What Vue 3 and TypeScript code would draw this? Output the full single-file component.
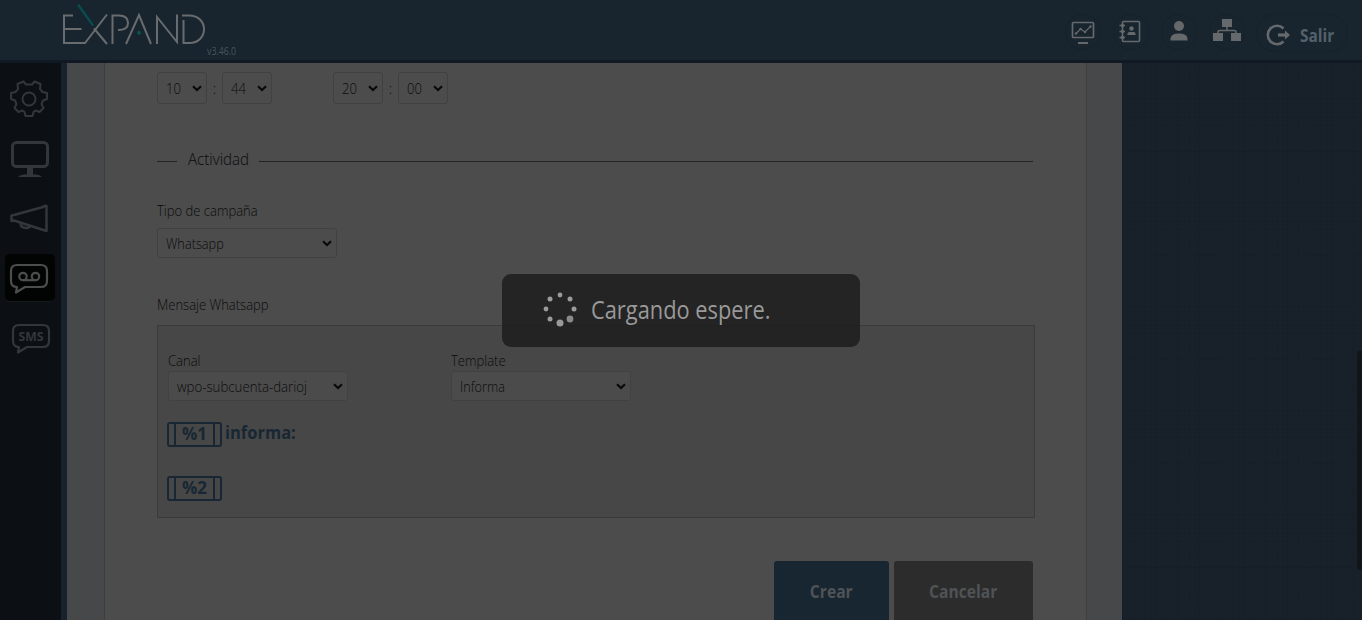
<script setup lang="ts">
interface TimeGroup { hour: string; minute: string }
interface Field { id: string; label: string; value: string }
interface MessageLine { variable: string; text: string }

const times: TimeGroup[] = [
  { hour: '10', minute: '44' },
  { hour: '20', minute: '00' },
]
const channelFields: Field[] = [
  { id: 'canal', label: 'Canal', value: 'wpo-subcuenta-darioj' },
  { id: 'template', label: 'Template', value: 'Informa' },
]
const message: MessageLine[] = [
  { variable: '%1', text: 'informa:' },
  { variable: '%2', text: '' },
]
// Spinner dots: position, radius and colour
const dots = [
  { x: 18, y: 4, r: 2.4, c: '#9b9b9b' },
  { x: 28, y: 8, r: 2.5, c: '#9b9b9b' },
  { x: 32, y: 18, r: 2.5, c: '#9b9b9b' },
  { x: 28, y: 28, r: 3.4, c: '#8a8a8a' },
  { x: 18, y: 32, r: 3.5, c: '#999999' },
  { x: 8, y: 28, r: 2.5, c: '#9b9b9b' },
  { x: 4, y: 18, r: 2.4, c: '#9b9b9b' },
  { x: 8, y: 8, r: 2.5, c: '#9b9b9b' },
]
</script>

<template>
  <div class="app">
    <header class="header">
      <div class="brand">
        <svg class="logo" width="146" height="48" viewBox="60 0 146 48" fill="none" stroke="#686c6f" stroke-width="2">
          <path d="M73 15.500H64V43H85L107 14.500M64 29H81.500M94 28.500L107 44" />
          <path d="M78 4.500L93 25.500" stroke="#0b4b4d" stroke-width="2.500" />
          <path d="M112.500 44V15.500H119Q128 15.500 128 23Q128 30 118 30" />
          <path d="M126 44L139 15L151 44" />
          <circle cx="139" cy="32.700" r="2" fill="#0b5052" stroke="none" />
          <path d="M157 44V17L177 42V14.500" />
          <path d="M183.500 20V43H189C209 43 209 15.500 189 15.500H182" />
        </svg>
        <span class="version">v3.46.0</span>
      </div>
      <nav class="actions">
        <a class="round">
          <svg width="28" height="28" viewBox="0 0 28 28" fill="none" stroke="#65696c">
            <rect x="3.500" y="4.500" width="21" height="15" rx="1" stroke-width="1.700" />
            <path d="M7 15.500L11.500 11L16 14L21.500 8.500" stroke-width="1.200" />
            <g fill="#65696c" stroke="none"><circle cx="7" cy="15.500" r="1.200" /><circle cx="11.500" cy="11" r="1.200" /><circle cx="16" cy="14" r="1.200" /><circle cx="21.500" cy="8.500" r="1.200" /></g>
            <path d="M9 25H19" stroke-width="2" />
          </svg>
        </a>
        <a class="round">
          <svg width="28" height="28" viewBox="0 0 28 28" fill="none" stroke="#65696c">
            <rect x="5.500" y="3.500" width="17" height="20" rx="1" stroke-width="1.600" />
            <path d="M2.500 7.500H8M2.500 13.500H8M2.500 19.500H8" stroke-width="1.500" />
            <g fill="#65696c" stroke="none"><circle cx="5.500" cy="7.500" r="1.700" /><circle cx="5.500" cy="13.500" r="1.700" /><circle cx="5.500" cy="19.500" r="1.700" /><circle cx="14.500" cy="10.500" r="2.200" /><path d="M10.500 17V15.500Q10.500 14 12.500 14H16.500Q18.500 14 18.500 15.500V17Z" /></g>
          </svg>
        </a>
        <a class="round">
          <svg width="28" height="28" viewBox="0 0 28 28" fill="#65696c">
            <circle cx="14" cy="8" r="5" />
            <path d="M5.500 22.500V20.500Q6 15.500 14 15.500T22.500 20.500V22.500Z" />
          </svg>
        </a>
        <a class="round">
          <svg width="28" height="28" viewBox="0 0 28 28" fill="#65696c">
            <path d="M9 1H19V9H9ZM0 15H10V23H0ZM18 15H28V23H18Z" />
            <path d="M14 9V12.500M5 15V14Q5 12.500 7 12.500H21Q23 12.500 23 14V15" fill="none" stroke="#65696c" stroke-width="1.500" />
          </svg>
        </a>
        <a class="logout">
          <svg width="26" height="24" viewBox="0 0 26 24" fill="none" stroke="#65696c" stroke-width="2.600">
            <path d="M18.500 5.500A9.200 9.200 0 1 0 18.500 18.500" />
            <path d="M13 12H21" stroke-width="3.200" /><path d="M20 7.500L25 12L20 16.500Z" fill="#65696c" stroke="none" />
          </svg>
          <span>Salir</span>
        </a>
      </nav>
    </header>

    <div class="body">
      <aside class="sidebar">
        <a class="tool">
          <svg width="40" height="40" viewBox="0 0 40 40" fill="none" stroke="#33373b" stroke-width="2" stroke-linejoin="round">
            <path d="M14.500 3.500L17 6.500H23L25.500 3.500L31.500 6L31 11L33.500 14L38 15V21L34 22.500L32.500 26L34.500 30L30.500 34L26.500 32.500L24.500 34L23.500 38H16.500L15.500 34L13.500 32.500L9.500 34L5.500 30L7.500 26L6 22.500L2 21V15L6.500 14L9 11L8.500 6Z" />
            <circle cx="20" cy="21" r="6.500" />
          </svg>
        </a>
        <a class="tool">
          <svg width="40" height="40" viewBox="0 0 40 40" fill="none" stroke="#33373b" stroke-width="3">
            <rect x="3.500" y="4.500" width="35" height="24" rx="4" />
            <path d="M21 29V37" stroke-width="6" /><path d="M9 39Q11 36.500 15 36.500H27Q31 36.500 33 39Z" fill="#33373b" stroke="none" />
          </svg>
        </a>
        <a class="tool">
          <svg width="40" height="40" viewBox="0 0 40 40" fill="none" stroke="#33373b" stroke-width="2.500" stroke-linejoin="round">
            <path d="M37.500 8V33L5 22.500L2.500 23V17.500L5 17L34 9Q35 7.500 37.500 8Z" />
            <path d="M11.500 25Q11.500 30 17.500 30Q20.500 30 20.500 27.500" />
          </svg>
        </a>
        <a class="tool selected">
          <svg width="40" height="40" viewBox="0 0 40 40" fill="none" stroke="#4c4d4d" stroke-width="2.200" stroke-linejoin="round">
            <path d="M8 7H32Q38 7 38 13V23Q38 29 32 29H16L7 34.500L8 29Q2 29 2 23V13Q2 7 8 7Z" />
            <circle cx="14" cy="18.500" r="3.700" /><circle cx="26.500" cy="18.500" r="3.700" /><path d="M14 22.200H26.500" />
          </svg>
        </a>
        <a class="tool sms">
          <svg width="40" height="40" viewBox="0 0 40 40" fill="none" stroke="#33373b" stroke-width="2.200" stroke-linejoin="round">
            <path d="M8 7H32Q38 7 38 13V23Q38 29 32 29H16L7 34.500L8 29Q2 29 2 23V13Q2 7 8 7Z" />
            <text x="7.500" y="22.500" textLength="25" lengthAdjust="spacingAndGlyphs" fill="#33373b" stroke="none">SMS</text>
          </svg>
        </a>
      </aside>

      <main class="panel">
        <div class="sheet">
          <div class="times">
            <div v-for="time in times" :key="time.hour" class="time">
              <div class="select small"><span class="label">{{ time.hour }}</span><svg width="10" height="7" viewBox="0 0 10 7"><path d="M1 1.200L5 5L9 1.200" /></svg></div>
              <span class="colon">:</span>
              <div class="select small"><span class="label">{{ time.minute }}</span><svg width="10" height="7" viewBox="0 0 10 7"><path d="M1 1.200L5 5L9 1.200" /></svg></div>
            </div>
          </div>
          <div class="section"><i class="lead"></i><h2><span>Actividad</span></h2><i class="rule"></i></div>
          <div class="label type">Tipo de campaña</div>
          <div class="select"><span class="label whatsapp">Whatsapp</span><svg width="10" height="7" viewBox="0 0 10 7"><path d="M1 1.200L5 5L9 1.200" /></svg></div>
          <div class="label message-label">Mensaje Whatsapp</div>
          <section class="box">
            <div class="fields">
              <div v-for="field in channelFields" :key="field.id" class="field">
                <div class="label">{{ field.label }}</div>
                <div class="select"><span class="label" :class="field.id + '-value'">{{ field.value }}</span><svg width="10" height="7" viewBox="0 0 10 7"><path d="M1 1.200L5 5L9 1.200" /></svg></div>
              </div>
            </div>
            <div v-for="line in message" :key="line.variable" class="line">
              <span class="token"><b>{{ line.variable }}</b></span><span class="copy">{{ line.text }}</span>
            </div>
          </section>
          <div class="buttons">
            <button class="create"><span>Crear</span></button>
            <button class="cancel"><span>Cancelar</span></button>
          </div>
        </div>
      </main>
      <div class="backdrop"><i class="scrollbar"></i></div>
    </div>
    <div class="loading">
      <svg width="36" height="36" viewBox="0 0 36 36"><circle v-for="(dot, i) in dots" :key="i" :cx="dot.x" :cy="dot.y" :r="dot.r" :fill="dot.c" /></svg>
      <span>Cargando espere.</span>
    </div>
  </div>
</template>

<style>
html, body { margin: 0; overflow: hidden; background: #161f29; }
</style>

<style scoped>
* { box-sizing: border-box; }
.app { position: relative; width: 1362px; height: 620px; overflow: hidden; font-family: "Open Sans", "Noto Sans", sans-serif; color: #0b0b0b; }
.header { height: 63px; background: #18242e; border-bottom: 3px solid #111a24; display: flex; justify-content: space-between; padding: 0 14px 0 60px; }
.brand { display: flex; }
.logo { display: block; }
.version { font-size: 10px; line-height: 14px; color: #4b545b; margin: 44px 0 0 1px; width: 30px; white-space: nowrap; transform: scaleX(.88); transform-origin: left; }
.actions { display: flex; align-items: flex-start; padding-top: 14px; gap: 12px; }
.round { width: 36px; height: 36px; display: grid; place-items: center; border: 1px solid #17212a; border-radius: 50%; }
.logout { width: 92px; height: 38px; border: 1px solid #17212a; border-radius: 19px; display: flex; align-items: center; padding: 3px 0 0 8px; margin-left: -1px; }
.logout span { margin-left: 9px; font-size: 17px; line-height: 24px; font-weight: 700; color: #52616b; transform: scaleX(.91); transform-origin: left; padding-top: 3px; }
.body { display: flex; height: 557px; }
.sidebar { width: 67px; background: #0c1015; border-right: 6px solid #18222c; display: flex; flex-direction: column; gap: 12px; padding: 11px 0 0 5px; }
.tool { width: 50px; height: 48px; display: grid; place-items: center; border-radius: 5px; padding-right: 2px; }
.selected { background: #020303; border-bottom: 1px solid #151a1d; }
.sms { padding: 0 0 0 2px; }
.sms text { font: 700 13px "Open Sans", sans-serif; }
.panel { width: 1055px; background: #474849; padding: 0 35px 0 37px; }
.sheet { height: 557px; background: #4c4c4c; border: solid #3d3e3f; border-width: 0 1px; padding: 9px 51px 0 52px; }
.label { font-size: 14px; font-weight: 300; line-height: 20px; white-space: nowrap; transform: scaleX(.93); transform-origin: left; }
.times { display: flex; gap: 61px; }
.time { display: flex; height: 32px; }
.colon { width: 15px; text-align: center; font-size: 14px; line-height: 33px; font-weight: 300; }
.select { width: 180px; height: 30px; border: 1px solid #404142; border-radius: 3px; background: #4c4c4c; display: flex; justify-content: space-between; align-items: center; padding: 1px 4px 0 7.5px; }
.select svg { fill: none; stroke: #080909; stroke-width: 2.1; margin-top: -1px; }
.select .label { transform: scaleX(.91); }
.select .canal-value { transform: scaleX(.945); }
.small { width: 50px; height: 32px; }
.small .label { transform: scaleX(.93); }
.section { display: flex; align-items: center; height: 24px; margin-top: 45px; width: 876px; }
.section i { height: 1px; background: #242424; }
.lead { width: 20px; }
.rule { flex: 1; }
.section h2 { width: 82px; height: 24px; margin: 0; padding-left: 11px; font-size: 16px; line-height: 20px; font-weight: 300; }
.section h2 span { display: inline-block; transform: scaleX(.945); transform-origin: left; }
.type { margin-top: 28px; margin-bottom: 7px; }
.message-label { margin-top: 37px; margin-bottom: 10px; }
.box { width: 878px; height: 193px; border: 1px solid #3a3a3a; background: #474747; padding: 25px 0 0 9px; }
.fields { display: flex; gap: 103px; padding-left: 1px; }
.field .select { background: #4b4b4b; }
.line { height: 25px; display: flex; margin: 21px 0 29px; color: #182733; font-size: 17px; font-weight: 700; }
.token { width: 55px; height: 25px; border: 2px solid #182733; border-radius: 3px; padding: 0 5px; }
.token b { height: 21px; border: solid #182733; border-width: 0 2px; display: grid; place-items: center; line-height: 19px; padding-bottom: 2px; font-weight: 700; }
.copy { margin-left: 3px; line-height: 22px; transform: scaleX(.97); transform-origin: left; }
.buttons { display: flex; justify-content: flex-end; gap: 5px; width: 876px; margin-top: 43px; }
.buttons button { border: 0; height: 64px; border-radius: 3px; font: 700 17px "Open Sans", sans-serif; color: #505355; background: #2c2c2c; padding: 0 0 3px; }
.buttons span { display: inline-block; transform: scaleX(.92); }
.buttons .create { width: 115px; background: #182631; }
.buttons .cancel { width: 139px; }
.backdrop { flex: 1; background-color: #18212a; background-image: repeating-linear-gradient(90deg, rgba(0,0,0,.08) 0 1px, transparent 1px 7px, rgba(0,0,0,.05) 7px 8px, transparent 8px 11px), repeating-linear-gradient(0deg, rgba(0,0,0,.07) 0 1px, transparent 1px 9px, rgba(0,0,0,.05) 9px 10px, transparent 10px 13px); display: flex; justify-content: flex-end; padding-top: 288px; }
.scrollbar { width: 5px; height: 219px; background: #101519; border-radius: 3px 0 0 3px; }
.loading { position: absolute; left: 502px; top: 273.5px; width: 358px; height: 73px; border-radius: 9px; background: rgba(30, 30, 30, .87); display: flex; align-items: center; padding: 0 0 3px 40px; }
.loading span { margin-left: 13px; font-size: 25px; line-height: 36px; font-weight: 400; color: #999; white-space: nowrap; transform: scaleX(.873); transform-origin: left; padding-top: 1px; }
</style>
